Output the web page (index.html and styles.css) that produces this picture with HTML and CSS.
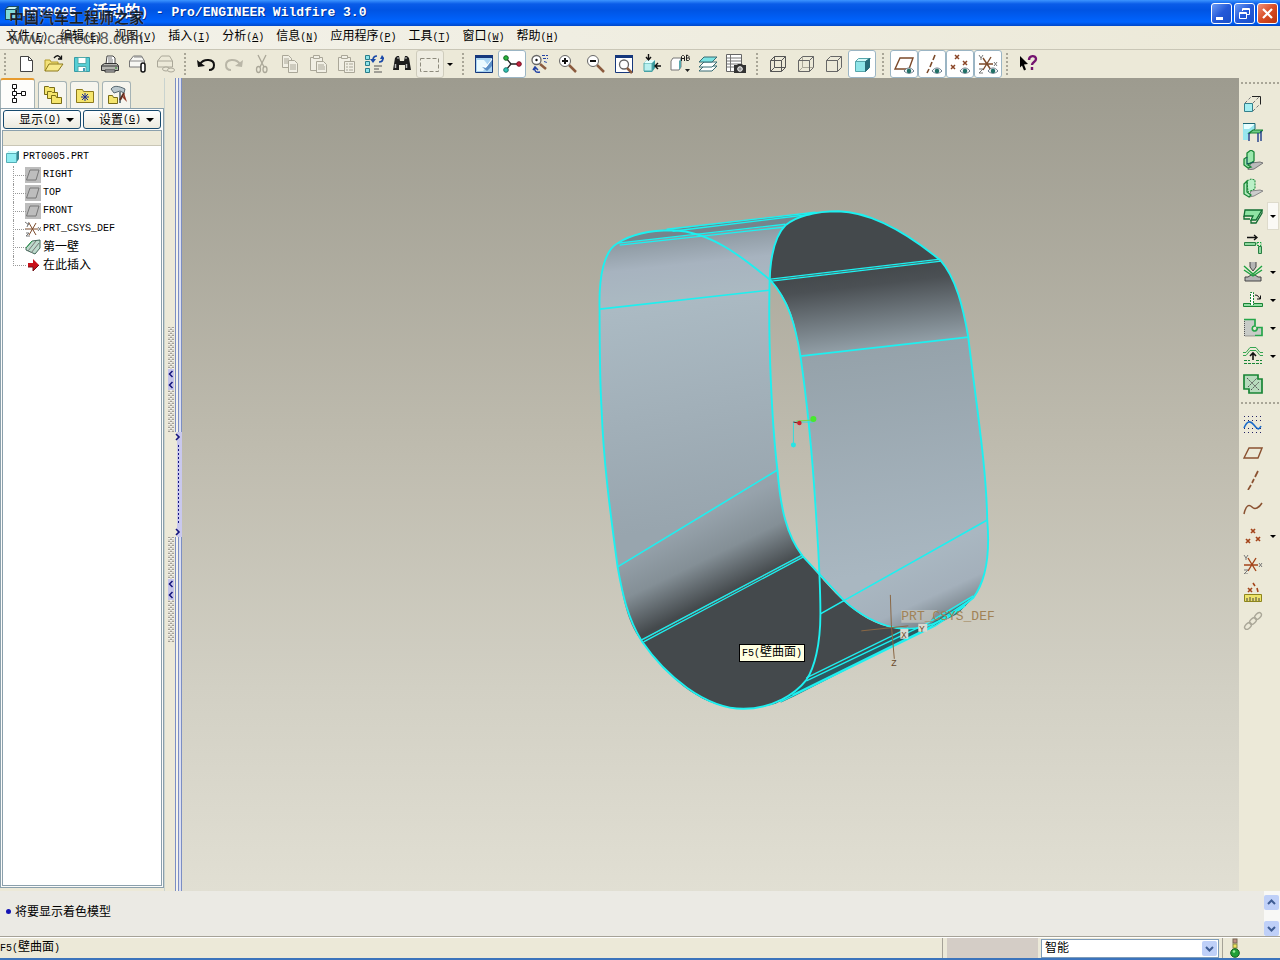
FILE: index.html
```html
<!DOCTYPE html>
<html lang="zh-CN">
<head>
<meta charset="utf-8">
<title>PRT0005 (活动的) - Pro/ENGINEER Wildfire 3.0</title>
<link rel="stylesheet" href="styles.css">
</head>
<body>
<div class="app">
<header class="titlebar">
  <svg class="app-icon" viewBox="0 0 16 16"><path d="M1 4l3-3h11v10l-3 4H1z" fill="#1b4a60"/><path d="M2 5h9v9H2z" fill="#7fd9d9"/><path d="M2 4l3-2h8l-2 2z" fill="#c8f4f0"/></svg>
  <h1 class="title">PRT0005 (<span class="title-cjk">活动的</span>) - Pro/ENGINEER Wildfire 3.0</h1>
  <div class="win-buttons">
    <button class="win" aria-label="最小化"><svg viewBox="0 0 19 19"><path d="M4 13h7v3H4z" fill="#fff"/></svg></button>
    <button class="win" aria-label="还原"><svg viewBox="0 0 19 19" fill="none" stroke="#fff"><path d="M7.500 7V4.500h7v6H12M7 5.500h8"/><path d="M4.500 8.500h7v6h-7zM4 9.500h8"/></svg></button>
    <button class="win close" aria-label="关闭"><svg viewBox="0 0 19 19"><path d="M5 5l9 9M14 5l-9 9" stroke="#fff" stroke-width="2.200"/></svg></button>
  </div>
  <div class="watermark"><span class="mark-name">中国汽车工程师之家</span><span class="mark-url">www.cartech8.com</span></div>
</header>

<nav class="menubar">
  <button>文件<span class="l">(<u>F</u>)</span></button>
  <button>编辑<span class="l">(<u>E</u>)</span></button>
  <button>视图<span class="l">(<u>V</u>)</span></button>
  <button>插入<span class="l">(<u>I</u>)</span></button>
  <button>分析<span class="l">(<u>A</u>)</span></button>
  <button>信息<span class="l">(<u>N</u>)</span></button>
  <button>应用程序<span class="l">(<u>P</u>)</span></button>
  <button>工具<span class="l">(<u>T</u>)</span></button>
  <button>窗口<span class="l">(<u>W</u>)</span></button>
  <button>帮助<span class="l">(<u>H</u>)</span></button>
</nav>

<div class="toolbar">
  <span class="grip"></span>
  <button class="tool" aria-label="新建"><svg viewBox="0 0 20 20"><path d="M4.500 2.500h8l4 4v11h-12z" fill="#fff" stroke="#444"/><path d="M12.500 2.500v4h4" fill="none" stroke="#444"/></svg></button>
  <button class="tool" aria-label="打开"><svg viewBox="0 0 20 20"><path d="M1 17V6h5l1 2h7v3" fill="#f3e27a" stroke="#b49b28"/><path d="M1 17l4-7h14l-5 7z" fill="#f7e98c" stroke="#8d7a1c"/><path d="M10 4c3-4 6-2 7 1m-3 0h3.500V1.500" fill="none" stroke="#111" stroke-width="1.300"/></svg></button>
  <button class="tool" aria-label="保存"><svg viewBox="0 0 20 20"><path d="M2.500 3.500h15v14h-15z" fill="#56cfd5" stroke="#379aa5"/><path d="M6 3.500h8v6H6zM6 12.500h8v5H6z" fill="#fff" stroke="#5aa"/><path d="M11 14h2v3h-2z" fill="#49b"/></svg></button>
  <button class="tool" aria-label="打印"><svg viewBox="0 0 20 20"><path d="M6 10l1-8h6l2 2v6" fill="#fff" stroke="#444"/><path d="M8 4h4M8 6h5M8 8h5" stroke="#777"/><path d="M1.500 11.500l3-2h12l2 2v5h-17z" fill="#b5b5b0" stroke="#333"/><path d="M2 12h16M5 16h10v2H5z" stroke="#333" fill="#ddd"/><path d="M15 14h2" stroke="#282"/></svg></button>
  <button class="tool" aria-label="发送"><svg viewBox="0 0 20 20"><path d="M1.500 7l4-5h8l3 5v6h-15z" fill="#f7f7f3" stroke="#777"/><path d="M2 7h14M6 3l8 0" fill="none" stroke="#888"/><rect x="13" y="9" width="4" height="9" rx="2" fill="#fff" stroke="#111" stroke-width="1.500"/></svg></button>
  <button class="tool" aria-label="链接发送"><svg viewBox="0 0 20 20" fill="none" stroke="#aaa798"><path d="M1.500 7l4-5h8l3 5v6h-15z"/><path d="M2 7h14"/><g fill="#ece9d8"><ellipse cx="10" cy="15" rx="3.500" ry="2"/><ellipse cx="15" cy="16" rx="3.500" ry="2"/></g></svg></button>
  <span class="grip"></span>
  <button class="tool" aria-label="撤消"><svg viewBox="0 0 20 20"><path d="M4 10c4-6 14-5 14 1 0 3-2 5-5 5" fill="none" stroke="#111" stroke-width="2"/><path d="M1 6l1 7 7-1z" fill="#111"/></svg></button>
  <button class="tool" aria-label="重做"><svg viewBox="0 0 20 20"><path d="M16 10C12 4 2 5 2 11c0 3 2 5 5 5" fill="none" stroke="#b9b6a7" stroke-width="2"/><path d="M19 6l-1 7-7-1z" fill="#b9b6a7"/></svg></button>
  <button class="tool" aria-label="剪切"><svg viewBox="0 0 20 20" fill="none" stroke="#aaa798" stroke-width="1.300"><path d="M6 1l6 12M14 1L8 13"/><ellipse cx="6.500" cy="15.500" rx="2" ry="3"/><ellipse cx="13" cy="15.500" rx="2" ry="3"/></svg></button>
  <button class="tool" aria-label="复制"><svg viewBox="0 0 20 20" fill="#f1efe4" stroke="#aaa798"><path d="M2.500 1.500h6l3 3v9h-9z"/><path d="M8.500 6.500h6l3 3v9h-9z"/><path d="M4 5h5M4 7h4M4 9h4M10 11h6M10 13h6M10 15h6"/></svg></button>
  <button class="tool" aria-label="粘贴"><svg viewBox="0 0 20 20" fill="#f1efe4" stroke="#aaa798"><path d="M2.500 3.500h12v13h-12z"/><path d="M5.500 1.500h6v3h-6z"/><path d="M8.500 7.500h7l3 3v8h-10z"/><path d="M10 11h6M10 13h7M10 15h7"/></svg></button>
  <button class="tool" aria-label="选择性粘贴"><svg viewBox="0 0 20 20" fill="#f1efe4" stroke="#aaa798"><path d="M2.500 3.500h12v13h-12z"/><path d="M5.500 1.500h6v3h-6z"/><path d="M8.500 7.500h10v11h-10z"/><path d="M10 10h2m1 0h4M10 13h2m1 0h4M10 16h2m1 0h4"/></svg></button>
  <button class="tool" aria-label="再生"><svg viewBox="0 0 20 20"><path d="M1.500 1.500h4v4h-4zM1.500 7.500h4v4h-4zM1.500 14.500h4v4h-4z" fill="#8ee3e8" stroke="#287d8b"/><path d="M9 6c0-3 2-4 4-4M19 4c0 3-2 4-4 4" fill="none" stroke="#1b4aa8" stroke-width="1.700"/><path d="M6 5h6l-3 4zM16 5h5l-3-4z" fill="#1b4aa8"/><path d="M10 12h8M10 15h5M10 18h8" stroke="#555"/></svg></button>
  <button class="tool" aria-label="查找"><svg viewBox="0 0 20 20"><path d="M3 4l2-2h2l1 5h4l1-5h2l2 2 2 12h-6v-5H7v5H1z" fill="#1d1d1d"/><path d="M3.500 10v4M14.500 10v4" stroke="#bbb" stroke-width="1.500"/><path d="M5 3h2v2H5zM13 3h2v2h-2z" fill="#777"/></svg></button>
  <button class="tool boxed" aria-label="选取"><svg viewBox="0 0 20 20"><path d="M.5 4.500h18v13H.5z" fill="none" stroke="#8d8a7d" stroke-dasharray="4 2"/></svg></button>
  <button class="drop" aria-label="选取选项"></button>
  <span class="grip wide"></span>
  <button class="tool" aria-label="重画"><svg viewBox="0 0 20 20"><path d="M1.500 1.500h17v17h-17z" fill="#a9d4f2" stroke="#16387c"/><path d="M1 1h18v3H1z" fill="#16387c"/><path d="M3 6h7l4 5-5 6H3z" fill="#eafaff"/><path d="M8 13l4 1 6-8v6l-5 5z" fill="#5c8fc5"/><path d="M9 12l3 1 6-8" fill="none" stroke="#fff"/></svg></button>
  <button class="tool on" aria-label="旋转中心"><svg viewBox="0 0 20 20"><path d="M4 4l5 6h8M9 10l-5 6" fill="none" stroke="#222" stroke-width="1.300"/><circle cx="4" cy="4" r="2.300" fill="#28b53c" stroke="#166321"/><circle cx="17" cy="10" r="2.300" fill="#c4213c" stroke="#761022"/><circle cx="4" cy="16" r="2.300" fill="#31c5b5" stroke="#1b776e"/></svg></button>
  <button class="tool" aria-label="定向模式"><svg viewBox="0 0 20 20"><path d="M10 10l6 5" stroke="#8b5b3e" stroke-width="2.500"/><circle cx="6.500" cy="6" r="4.500" fill="#fff" stroke="#666" stroke-width="1.300"/><circle cx="6.500" cy="6" r="1.200" fill="#111"/><path d="M12 1.500h6M13 4.500h5M14 7.500l3 1" stroke="#2343a5" stroke-dasharray="3 1"/><path d="M5 14c-1 3 1 5 5 4m-7-2l2-3 3 3" stroke="#2343a5" stroke-width="1.500" fill="none"/></svg></button>
  <button class="tool" aria-label="放大"><svg viewBox="0 0 20 20"><path d="M11 11l7 7" stroke="#8b5b3e" stroke-width="2.500"/><circle cx="7" cy="7" r="5.500" fill="#fff" stroke="#666"/><path d="M4 7h6M7 4v6" stroke="#111" stroke-width="2"/></svg></button>
  <button class="tool" aria-label="缩小"><svg viewBox="0 0 20 20"><path d="M11 11l7 7" stroke="#8b5b3e" stroke-width="2.500"/><circle cx="7" cy="7" r="5.500" fill="#fff" stroke="#666"/><path d="M4 7h6" stroke="#111" stroke-width="2"/></svg></button>
  <button class="tool" aria-label="重新调整"><svg viewBox="0 0 20 20"><path d="M1.500 1.500h17v17h-17z" fill="#fff" stroke="#16387c"/><path d="M1 1h18v3H1z" fill="#16387c"/><circle cx="10" cy="10.500" r="4.500" fill="#fff" stroke="#666" stroke-width="1.300"/><path d="M13 14l5 5" stroke="#8b5b3e" stroke-width="2.500"/></svg></button>
  <button class="tool" aria-label="重定向"><svg viewBox="0 0 20 20"><path d="M2 9l3-3h8v8l-3 4H2z" fill="#3a9aa0"/><path d="M2 9h8v8H2z" fill="#b9f0f0" stroke="#5aa"/><path d="M2 9l3-3h8l-3 3z" fill="#e4ffff"/><path d="M6.500 0v5M4 3l2.500 3L9 3M19 12h-5M16 9l-3 3 3 3" fill="none" stroke="#111" stroke-width="1.400"/></svg></button>
  <button class="tool" aria-label="视图列表"><svg viewBox="0 0 20 20"><path d="M1 7l2-3h8v9l-2 3H1z" fill="#fff" stroke="#777"/><path d="M11 5v8l-2 3V7z" fill="#58a7ad"/><path d="M11.500 7V2.500l1-1h1l1 1V7m-3-2.500h3M16.500 1v5.500h2l1-1V4.500l-1-.5.500-.5v-1l-1-1z M16.500 4h2" fill="none" stroke="#222"/><path d="M15 15h5l-2.500 3z" fill="#222"/></svg></button>
  <button class="tool" aria-label="层"><svg viewBox="0 0 20 20" stroke="#376b72"><path d="M1 17l5-5h13l-5 5z" fill="#fff"/><path d="M1 13l5-5h13l-5 5z" fill="#fff"/><path d="M1 8l5-5h13l-5 5z" fill="#7ce3e3"/></svg></button>
  <button class="tool" aria-label="视图管理器"><svg viewBox="0 0 20 20"><path d="M.5.500h15v17H.5z" fill="#fff" stroke="#666"/><path d="M4.500 1v16M1 4h14M1 7h14M1 10h14M1 13h14" stroke="#777"/><path d="M8 11h3l1-1h4l1 1h3v8H8z" fill="#333"/><circle cx="14" cy="15" r="2.300" fill="#999" stroke="#fff"/></svg></button>
  <span class="grip wide"></span>
  <button class="tool" aria-label="线框"><svg viewBox="0 0 20 20" fill="none" stroke="#555"><path d="M2.500 6.500h11v11h-11zM6.500 2.500h11v11h-11zM2.500 6.500l4-4M13.500 6.500l4-4M2.500 17.500l4-4M13.500 17.500l4-4"/></svg></button>
  <button class="tool" aria-label="隐藏线"><svg viewBox="0 0 20 20" fill="none" stroke="#666"><path d="M6.500 3v10.500H17M2.500 17.500l4-4" stroke="#aaa798"/><path d="M2.500 6.500h11v11h-11zM2.500 6.500l4-4h11v11l-4 4M13.500 6.500l4-4"/></svg></button>
  <button class="tool" aria-label="消隐"><svg viewBox="0 0 20 20" fill="none" stroke="#666"><path d="M2.500 6.500h11v11h-11zM2.500 6.500l4-4h11v11l-4 4M13.500 6.500l4-4"/></svg></button>
  <button class="tool on" aria-label="着色"><svg viewBox="0 0 20 20"><path d="M3.500 7.500h10v10h-10z" fill="#8fe5e9" stroke="#56a6ac"/><path d="M3.500 7.500l3-3h12l-5 3z" fill="#d2f9f9" stroke="#56a6ac"/><path d="M13.500 7.500l4-3v9l-4 4z" fill="#276c79" stroke="#276c79"/></svg></button>
  <span class="grip wide"></span>
  <button class="tool on" aria-label="基准平面"><svg viewBox="0 0 20 20"><path d="M1 15L6 4h13l-4 11z" fill="none" stroke="#7c4a2a" stroke-width="1.400"/><path d="M10 17c3-4 7-4 10 0-3 3-7 3-10 0z" fill="#fff" stroke="#678"/><circle cx="15" cy="17" r="2.300" fill="#217067"/></svg></button>
  <button class="tool on" aria-label="基准轴"><svg viewBox="0 0 20 20"><path d="M13 1l-2 5M10 8l-2 5M7 15l-2 4" stroke="#7c4a2a" stroke-width="1.600"/><path d="M10 17c3-4 7-4 10 0-3 3-7 3-10 0z" fill="#fff" stroke="#678"/><circle cx="15" cy="17" r="2.300" fill="#217067"/></svg></button>
  <button class="tool on" aria-label="基准点"><svg viewBox="0 0 20 20"><path d="M5 1l4 4m0-4L5 5M1 11l4 4m0-4l-4 4M13 7l4 4m0-4l-4 4" stroke="#8a4526" stroke-width="1.500"/><path d="M10 17c3-4 7-4 10 0-3 3-7 3-10 0z" fill="#fff" stroke="#678"/><circle cx="15" cy="17" r="2.300" fill="#217067"/></svg></button>
  <button class="tool on" aria-label="坐标系"><svg viewBox="0 0 20 20"><path d="M1 10h14M5 4l8 12M13 3L5 16" stroke="#7c4a2a" stroke-width="1.400"/><path d="M1 1l2 3 2-3M3 4v2M1 15h4l-4 4h4M16 8l3 4m0-4l-3 4" stroke="#777" fill="none"/><path d="M10 17c3-4 7-4 10 0-3 3-7 3-10 0z" fill="#fff" stroke="#678"/><circle cx="15" cy="17" r="2.300" fill="#217067"/></svg></button>
  <span class="grip"></span>
  <button class="tool" aria-label="上下文帮助"><svg viewBox="0 0 20 20"><path d="M2 2l8 8-4 .5 2 5-2 1-2-5-2 2z" fill="#000"/><path d="M11 6c0-5 7-5 7-1 0 3-4 3-4 6M14 13v3" stroke="#74136f" stroke-width="2.400" fill="none"/></svg></button>
</div>

<main class="work">
  <aside class="navigator">
    <div class="tabs">
      <button class="tab active" aria-label="模型树"><svg viewBox="0 0 20 20" fill="#fff" stroke="#111"><path d="M4.500.500h4v4h-4zM4.500 7.500h4v4h-4zM4.500 14.500h4v4h-4zM13.500 7.500h4v4h-4zM9 9.500h4M6.500 5v2M6.500 12v2"/></svg></button>
      <button class="tab" aria-label="文件夹浏览器"><svg viewBox="0 0 20 20" fill="#f5e56d" stroke="#7a6d16"><path d="M1.500 9.500v-8h4l1 1h5v7z"/><path d="M4.500 13.500v-7h4l1 1h5v6z"/><path d="M8.500 18.500v-8h4l1 2h5v6z"/></svg></button>
      <button class="tab" aria-label="收藏夹"><svg viewBox="0 0 20 20"><path d="M1.500 17.500v-13h6l1 2h10v11z" fill="#f5e56d" stroke="#8d7a1c"/><path d="M10 8v8M6 12h8M7 9l6 6M13 9l-6 6" stroke="#1a2c98"/></svg></button>
      <button class="tab" aria-label="连接"><svg viewBox="0 0 20 20"><path d="M1.500 18.500v-8h4l1 2h4v6z" fill="#f5e56d" stroke="#7a6d16"/><path d="M4 4c3-4 8-3 14 0l-1 4-4-2-6 2z" fill="#b9c7cd" stroke="#55666f"/><path d="M13 7v11" stroke="#6f7f85" stroke-width="2"/><path d="M17 8l-4 7" stroke="#5f2f22" stroke-width="2"/><path d="M17 8l3 9-4-4z" fill="#8f3422"/></svg></button>
    </div>
    <div class="panel">
      <div class="panel-buttons">
        <button class="panel-btn">显示<span class="l">(<u>O</u>)</span><i class="caret"></i></button>
        <button class="panel-btn">设置<span class="l">(<u>G</u>)</span><i class="caret"></i></button>
      </div>
      <div class="tree-box">
        <div class="tree-head"></div>
        <ul class="tree">
          <li class="root"><svg viewBox="0 0 16 16"><path d="M2 5l2-3h10v8l-3 4H2z" fill="#39838e"/><path d="M1.500 4.500h10v9h-10z" fill="#8eedf2" stroke="#55aeb6"/><path d="M2 4l2-2h9l-2 2z" fill="#cff"/></svg><span class="l">PRT0005.PRT</span></li>
          <li><svg viewBox="0 0 16 16"><path d="M0 0h16v16H0z" fill="#bdbdbd"/><path d="M1.500 13L5 3h9l-3 10z" fill="none" stroke="#777"/></svg><span class="l">RIGHT</span></li>
          <li><svg viewBox="0 0 16 16"><path d="M0 0h16v16H0z" fill="#bdbdbd"/><path d="M1.500 13L5 3h9l-3 10z" fill="none" stroke="#777"/></svg><span class="l">TOP</span></li>
          <li><svg viewBox="0 0 16 16"><path d="M0 0h16v16H0z" fill="#bdbdbd"/><path d="M1.500 13L5 3h9l-3 10z" fill="none" stroke="#777"/></svg><span class="l">FRONT</span></li>
          <li><svg viewBox="0 0 16 16"><path d="M0 8h13M4 2l7 12M11 2L4 14" stroke="#7c4a2a"/><path d="M0 1l4 3M4 1L2 6M1 12h3l-3 3h4M13 6l3 4m0-4l-3 4" stroke="#777" fill="none"/></svg><span class="l">PRT_CSYS_DEF</span></li>
          <li><svg viewBox="0 0 16 16"><path d="M1 9l6-7 8-1v8l-5 6-9-4z" fill="#bdd9cc" stroke="#43685a"/><path d="M3 12l8-10M6 14l8-10" stroke="#777"/><path d="M1 9l6-7" stroke="#2a9a4e"/></svg><span>第一壁</span></li>
          <li><svg viewBox="0 0 16 16"><path d="M3 6h5V2l6 6-6 6v-4H3z" fill="#c8111a"/><path d="M3 10h5v4l6-6" fill="none" stroke="#701015"/></svg><span>在此插入</span></li>
        </ul>
      </div>
    </div>
  </aside>
  <div class="gutter">
    <svg class="collapse" viewBox="0 0 6 105"><defs><pattern id="dots" width="4" height="4" patternUnits="userSpaceOnUse"><path d="M0 0h4v4H0z" fill="#d6d3c8"/><path d="M0 0h2v1H0zM2 2h2v1H2z" fill="#a3a097"/><path d="M0 1h2v1H0zM2 3h2v1H2z" fill="#f4f3ec"/></pattern></defs><path d="M0 0h6v105H0z" fill="url(#dots)"/><path d="M0 42h6v21H0z" fill="#c5c4ea"/><path d="M4.500 44l-3 3 3 3M4.500 55l-3 3 3 3" fill="none" stroke="#15157c" stroke-width="1.500"/></svg>
    <svg class="collapse" viewBox="0 0 6 105"><path d="M0 0h6v105H0z" fill="url(#dots)"/><path d="M0 42h6v21H0z" fill="#c5c4ea"/><path d="M4.500 44l-3 3 3 3M4.500 55l-3 3 3 3" fill="none" stroke="#15157c" stroke-width="1.500"/></svg>
  </div>
  <div class="sash">
    <svg viewBox="0 0 7 105"><path d="M0 0h7v105H0z" fill="#ece9d8"/><path d="M2 0h5v105H2z" fill="#c9c8ee"/><path d="M1 2l3 3-3 3M1 97l3 3-3 3" fill="none" stroke="#15157c" stroke-width="1.600"/><path d="M3.500 13v80" stroke="#15157c" stroke-dasharray="2 2"/></svg>
  </div>
  <section class="viewport">
    <svg class="model" viewBox="181 78 1058 813">
      <defs>
        <linearGradient id="gA" gradientUnits="userSpaceOnUse" x1="690" y1="233" x2="697" y2="300"><stop offset="0" stop-color="#8b979f"/><stop offset=".45" stop-color="#a7b3bf"/><stop offset="1" stop-color="#abbac2"/></linearGradient>
        <linearGradient id="gB" gradientUnits="userSpaceOnUse" x1="670" y1="300" x2="710" y2="520"><stop offset="0" stop-color="#abbac3"/><stop offset="1" stop-color="#98a5ae"/></linearGradient>
        <linearGradient id="gC" gradientUnits="userSpaceOnUse" x1="690" y1="522" x2="725" y2="594"><stop offset="0" stop-color="#97a3ac"/><stop offset=".5" stop-color="#848f96"/><stop offset="1" stop-color="#44494c"/></linearGradient>
        <linearGradient id="gF" gradientUnits="userSpaceOnUse" x1="880" y1="345" x2="910" y2="570"><stop offset="0" stop-color="#95a2aa"/><stop offset="1" stop-color="#a9b7c1"/></linearGradient>
        <linearGradient id="gG" gradientUnits="userSpaceOnUse" x1="860" y1="270" x2="869" y2="348"><stop offset="0" stop-color="#44494c"/><stop offset=".2" stop-color="#4b5054"/><stop offset="1" stop-color="#929fa7"/></linearGradient>
        <linearGradient id="gE" gradientUnits="userSpaceOnUse" x1="915" y1="560" x2="943" y2="620"><stop offset="0" stop-color="#a9b7c1"/><stop offset=".6" stop-color="#a4b0bb"/><stop offset="1" stop-color="#78838a"/></linearGradient>
      </defs>
      <path fill="#74858d" d="M617 243C632 234 650 230 672 229L815 212 785 226z"/>
      <path fill="url(#gA)" d="M599 309C599 280 603 250 617 243L785 225C775 236 770 255 769 290z"/>
      <path fill="url(#gB)" d="M599 309L769 290C768 350 772 430 777 470L617 567C606 490 599 430 599 309z"/>
      <path fill="url(#gC)" d="M617 567L777 470C780 505 785 532 802 556L641 641C625 620 622 595 617 567z"/>
      <path fill="#44494c" d="M641 641L802 556C830 588 860 629 905 629L930 627 775 704C720 720 680 695 641 641z"/>
      <path fill="#2c5a61" d="M807 680L910 629 930 627 973 598 960 611 930 627 793 697 780 703z"/>
      <path fill="url(#gF)" d="M800 356L968 337C976 410 985 460 987 520L844 601 819 575C818 510 810 420 800 356z"/>
      <path fill="url(#gE)" d="M844 601L987 520C990 550 986 580 973 598L930 627C895 633 868 622 844 601z"/>
      <path fill="url(#gG)" d="M770 280L940 260C957 280 963 310 968 337L800 356C794 315 788 300 770 280z"/>
      <path fill="#44494c" d="M770 280C770 258 773 237 785 225 800 213 820 211 838 211 875 212 910 235 940 260z"/>
      <path fill="#2e787b" d="M930 624L973 597 957 614 930 628z"/>
      <g fill="none" stroke="#1df0f0" stroke-width="1.900">
        <path d="M599 309C598 275 604 250 617 243C632 233 650 230 672 230C710 231 742 257 770 280C788 300 795 325 800 356C808 410 813 470 816 520C818 550 820 590 820 614C820 645 814 668 806 680C795 694 772 709 743 709C705 709 665 676 641 641C627 618 622 595 617 567C608 500 603 460 601 410C599 375 599 340 599 309z"/>
        <path d="M769 290C769 262 773 237 785 225C800 213 820 211 838 211C875 212 912 237 940 260C956 278 963 308 968 337C976 405 986 465 987 520C990 555 985 582 973 598C955 613 935 629 905 629C878 628 855 611 844 601L802 556C786 535 780 508 777 470C771 420 768 340 769 290z"/>
      </g>
      <g fill="none" stroke="#1df0f0">
        <path d="M617 243L785 224M619 245L783 227M666 229L815 212M672 231L811 214" stroke-width="1.300"/>
        <path d="M599 309L769 290M617 567L777 470M800 356L968 337M820 614L987 520" stroke-width="1.600"/>
        <path d="M770 279L940 259M771 281L941 261M641 640L802 555M643 642L803 557" stroke-width="1.300"/>
        <path d="M806 678L908 628M806 681L926 624 973 596M792 695L930 627 973 598M780 702L935 626 965 606" stroke-width="1.300"/>
      </g>
      <path d="M793 446v-24h20" fill="none" stroke="#38dada"/><path d="M796 421l16-1" stroke="#74d943"/><circle cx="813" cy="419" r="3" fill="#46e92e"/><path d="M793 422l5 1" stroke="#7a1616"/><circle cx="799" cy="423" r="2.200" fill="#d0202c"/><circle cx="793" cy="445" r="2.500" fill="#25e5e5"/>
      <path d="M901 610h36l-8 13h-28z" fill="#c4c6bf" opacity=".75"/>
      <path d="M890 595l1 30 3 34M861 631l47-5" fill="none" stroke="#8b6744"/>
      <path d="M900 629h8v10h-8zM918 624h9v8h-9z" fill="#d9dad3"/>
      <text class="csys" x="901" y="620">PRT_CSYS_DEF</text>
      <text class="axis" x="901" y="638">X</text><text class="axis" x="919" y="632">Y</text><text class="axis" x="891" y="666">Z</text>
    </svg>
    <div class="tooltip"><span class="l">F5(</span>壁曲面<span class="l">)</span></div>
  </section>

  <aside class="features">
    <span class="hgrip"></span>
    <div class="row"><button class="tool" aria-label="拉伸"><svg viewBox="0 0 20 20"><path d="M1.500 9.500h8v8h-8z" fill="#a4eff2" stroke="#34808c"/><path d="M2 9l7-7M10 9l7-7M10 17l7-7" stroke="#777" stroke-dasharray="3 2"/><path d="M9 2.500h8.500v8" fill="none" stroke="#222"/></svg></button></div>
    <div class="row"><button class="tool" aria-label="平整壁"><svg viewBox="0 0 20 20"><path d="M0 1h12v5L5 13v5H0z" fill="#98e6ee"/><path d="M1 2h11L6 7H1z" fill="#e7ffff"/><path d="M0 1.500h12V7L6 12" fill="none" stroke="#1b6574"/><path d="M6 11l4-3h10l-3 3z" fill="#6fcb86" stroke="#188535" stroke-width="1.200"/><path d="M6 11v8M15 11v9M18 9v10" fill="none" stroke="#1c3a8a" stroke-width="1.400"/></svg></button></div>
    <div class="row"><button class="tool" aria-label="法兰"><svg viewBox="0 0 20 20"><path d="M8 13l9-1 3 1-9 6-6 1z" fill="#bbb" stroke="#777"/><path d="M1 9l3-2V3l4-3 3 2v9l-6 4 3 2-3 1-4-3z" fill="#9ce8ad" stroke="#188535" stroke-width="1.300"/><path d="M4 7v7l7-2" fill="none" stroke="#135a58" stroke-width="1.300"/></svg></button></div>
    <div class="row"><button class="tool" aria-label="延伸法兰"><svg viewBox="0 0 20 20"><path d="M8 13l9-1 3 1-9 5-5 1z" fill="#ccc" stroke="#888"/><path d="M4 3l4-2 4 1v9l-7 3z" fill="#baf0c7" stroke="#188535" stroke-dasharray="2 1"/><path d="M4 3L1 6v10l5 3 2-2-4-3z" fill="#b2eabe" stroke="#188535" stroke-width="1.300"/></svg></button></div>
    <div class="row"><button class="tool" aria-label="平整"><svg viewBox="0 0 20 20"><path d="M2 4h17l-6 10H8l2-4H1z" fill="#8ee3a3" stroke="#116d32" stroke-width="1.300"/><path d="M1 10v3h6M8 14v3h5l6-10V4" fill="none" stroke="#116d32" stroke-width="1.300"/></svg></button><button class="drop lit" aria-label="平整选项"></button></div>
    <div class="row"><button class="tool" aria-label="延伸"><svg viewBox="0 0 20 20"><path d="M1.500 8.500h11v3h-11zM15.500 12.500h3v7h-3z" fill="#8cd79d" stroke="#2a7e43"/><path d="M4 3.500h10M11 1l3 2.500L11 6" fill="none" stroke="#111" stroke-width="1.300"/><path d="M14 8.500h4v3h-4z" stroke="#16a541" fill="none" stroke-dasharray="2 1"/></svg></button></div>
    <div class="row"><button class="tool" aria-label="折弯"><svg viewBox="0 0 20 20"><path d="M7 0v5l3 4 3-4V0M2 19v-4h3l3-2h4l3 2h3v4z" fill="#b5b5b5" stroke="#444"/><path d="M1 8l9 6 9-6M1 4l9 8 9-8" fill="none" stroke="#1ca13f" stroke-width="1.400"/></svg></button><button class="drop" aria-label="折弯选项"></button></div>
    <div class="row"><button class="tool" aria-label="展平"><svg viewBox="0 0 20 20"><path d="M.5 13.500h19v3H.5z" fill="#91dba3" stroke="#188535"/><path d="M7.500 15V2.500h3V15" fill="#fff" stroke="#188535" stroke-dasharray="2 1"/><path d="M12 5c3 0 4 2 5 4m-3 0h3.500V5.500" fill="none" stroke="#111"/></svg></button><button class="drop" aria-label="展平选项"></button></div>
    <div class="row"><button class="tool" aria-label="切口"><svg viewBox="0 0 20 20"><path d="M1 1h11v7a2.500 2.500 0 1 0 1 2h6v8H1z" fill="#c8cbc7"/><path d="M1 1.500h11V8a2.500 2.500 0 1 0 2 1.500h5v8h-7" fill="none" stroke="#25a64a" stroke-width="1.700"/><path d="M1.500 3v15H12" fill="none" stroke="#555" stroke-dasharray="1 1"/></svg></button><button class="drop" aria-label="切口选项"></button></div>
    <div class="row"><button class="tool" aria-label="成形"><svg viewBox="0 0 20 20"><path d="M0 9.500h3l4-5h6l4 5h3M0 6.500h3l4-5h6l4 5h3" fill="none" stroke="#34a550"/><path d="M10 14V7M7 10l3-3 3 3" fill="none" stroke="#111" stroke-width="1.600"/><path d="M1 14.500h6m6 0h6M1 17.500h18" stroke="#188535" stroke-dasharray="3 1"/></svg></button><button class="drop" aria-label="成形选项"></button></div>
    <div class="row"><button class="tool" aria-label="合并"><svg viewBox="0 0 20 20"><path d="M1 1h14v4h4v14H6v-4H1z" fill="#b7dbbd" stroke="#188535" stroke-width="1.700"/><path d="M4 4l12 12M5 13l9-9M8 16l8-8" stroke="#555" stroke-dasharray="2 1"/></svg></button></div>
    <span class="hgrip"></span>
    <div class="row"><button class="tool" aria-label="草绘"><svg viewBox="0 0 20 20"><path d="M1 2.500h18M1 6.500h18M1 14.500h18M1 18.500h18" stroke="#226" stroke-dasharray="1 3"/><path d="M1 14c3-7 6-8 10-3s5 5 7 1" fill="none" stroke="#1769c9" stroke-width="1.600"/></svg></button></div>
    <div class="row"><button class="tool" aria-label="平面"><svg viewBox="0 0 20 20"><path d="M1 16L6 6h13l-4 10z" fill="none" stroke="#8a5130" stroke-width="1.400"/></svg></button></div>
    <div class="row"><button class="tool" aria-label="轴"><svg viewBox="0 0 20 20"><path d="M15 1l-3 6M11 9l-2 4M8 15l-3 5" stroke="#8a5130" stroke-width="1.700"/></svg></button></div>
    <div class="row"><button class="tool" aria-label="曲线"><svg viewBox="0 0 20 20"><path d="M1 16c2-9 5-10 8-7s7 1 10-4" fill="none" stroke="#8a5130" stroke-width="1.500"/></svg></button></div>
    <div class="row"><button class="tool" aria-label="点"><svg viewBox="0 0 20 20"><path d="M8 3l4 4m0-4L8 7M3 13l4 4m0-4l-4 4M13 11l4 4m0-4l-4 4" stroke="#a4441a" stroke-width="1.700"/></svg></button><button class="drop" aria-label="点选项"></button></div>
    <div class="row"><button class="tool" aria-label="坐标系"><svg viewBox="0 0 20 20"><path d="M1 11h14M5 4l8 13M13 4L5 17" stroke="#a4441a" stroke-width="1.400"/><path d="M1 1l2 3 2-3M3 4v2M1 16h4l-4 4h4M16 9l3 4m0-4l-3 4" stroke="#777" fill="none"/></svg></button></div>
    <div class="row"><button class="tool" aria-label="分析"><svg viewBox="0 0 20 20"><path d="M5 6l4 4m0-4l-4 4M10 1l2 3M14 6l1 4" stroke="#a4441a" stroke-width="1.600"/><path d="M1.500 12.500h17v7h-17z" fill="#eee36a" stroke="#8d851c"/><path d="M4 19v-3M7 19v-4M10 19v-3M13 19v-4M16 19v-3" stroke="#444"/></svg></button></div>
    <div class="row"><button class="tool" aria-label="参照"><svg viewBox="0 0 20 20" fill="none" stroke="#aaa798" stroke-width="1.400"><ellipse cx="5" cy="16" rx="4" ry="2.500" transform="rotate(-45 5 16)"/><ellipse cx="10" cy="11" rx="4" ry="2.500" transform="rotate(-45 10 11)"/><ellipse cx="15" cy="6" rx="4" ry="2.500" transform="rotate(-45 15 6)"/></svg></button></div>
  </aside>
</main>

<section class="messages">
  <p class="message">将要显示着色模型</p>
  <div class="scroller">
    <button class="scroll" aria-label="向上"><svg viewBox="0 0 15 15"><path d="M4 9l3.500-3.500L11 9" fill="none" stroke="#3f5d94" stroke-width="2"/></svg></button>
    <button class="scroll" aria-label="向下"><svg viewBox="0 0 15 15"><path d="M4 6l3.500 3.500L11 6" fill="none" stroke="#3f5d94" stroke-width="2"/></svg></button>
  </div>
</section>

<footer class="status">
  <span class="status-text"><span class="l">F5(</span>壁曲面<span class="l">)</span></span>
  <span class="status-block"></span>
  <span class="filter"><select aria-label="过滤器"><option>智能</option></select><svg viewBox="0 0 15 15"><rect width="15" height="15" rx="2" fill="#bfd0f8"/><path d="M4 6l3.500 3.500L11 6" fill="none" stroke="#3f5d94" stroke-width="2"/></svg></span>
  <span class="light"><svg viewBox="0 0 12 20"><rect x="4" y="1" width="4" height="4" fill="#bf8f85" stroke="#765"/><rect x="4" y="6" width="4" height="4" fill="#eee25c" stroke="#884"/><circle cx="6" cy="15" r="4.300" fill="#22a036" stroke="#135d1d"/><circle cx="5" cy="13.500" r="1.300" fill="#9ef0a0"/></svg></span>
</footer>
</div>
</body>
</html>
```

FILE: styles.css
```css
* { box-sizing: border-box; }
body {
  margin: 0;
  font-family: "Liberation Sans", "Noto Sans CJK SC", sans-serif;
  font-size: 12px;
  line-height: 16px;
  color: #000;
}
button {
  font: inherit;
  color: inherit;
  margin: 0;
  padding: 0;
  border: 0;
  background: none;
  white-space: nowrap;
}
svg { display: block; flex: none; }
.l { font-family: "Liberation Mono", monospace; font-size: 10px; }
.app { display: flex; flex-direction: column; min-height: 100vh; background: #ece9d8; }

.titlebar {
  position: relative;
  display: flex;
  align-items: center;
  height: 26px;
  padding: 0 2px 0 4px;
  background: linear-gradient(#3d95ff 0, #0a5ce8 4px, #0054e3 10px, #0064ff 22px, #0047c8 26px);
}
.app-icon { width: 16px; height: 16px; }
.title {
  flex: 1;
  margin: 0 0 0 2px;
  font-family: "Liberation Mono", "Noto Sans CJK SC", monospace;
  font-size: 13px;
  line-height: 20px;
  color: #fff;
  text-shadow: 1px 1px #003399;
  white-space: nowrap;
}
.title-cjk { font-size: 16px; line-height: 16px; vertical-align: -1px; }
.win-buttons { display: flex; gap: 2px; }
.win {
  width: 21px;
  height: 21px;
  border: 1px solid #fff;
  border-radius: 3px;
  background: linear-gradient(135deg, #6c9cf5, #2459d8 50%, #1b50c8);
}
.win.close { background: linear-gradient(135deg, #f0907a, #d84c24 50%, #b93410); }
.win svg { width: 19px; height: 19px; }
.watermark {
  position: absolute;
  z-index: 2;
  left: 9px;
  top: 7px;
  display: flex;
  flex-direction: column;
  pointer-events: none;
}
.mark-name {
  font-size: 15px;
  line-height: 22px;
  font-weight: bold;
  color: #14202e;
  text-shadow: 0 0 1px #b8cff0;
}
.mark-url { font-size: 16px; line-height: 20px; color: rgba(50, 50, 50, .8); }

.menubar {
  display: flex;
  gap: 12px;
  height: 24px;
  padding: 2px 6px 6px;
  border-bottom: 1px solid #c9c6b6;
  background: linear-gradient(90deg, #f3f2ea, #ece9d8);
}

.toolbar { display: flex; height: 28px; }
.grip { position: relative; width: 12px; flex: none; padding: 3px 0 2px 4px; }
.grip::before { content: ""; display: block; height: 100%; width: 2px; background: repeating-linear-gradient(#a9a697 0 2px, #ece9d8 2px 4px); }
.grip.wide { width: 14px; padding-left: 6px; }
.tool { display: flex; align-items: center; justify-content: center; width: 28px; height: 28px; flex: none; border: 1px solid transparent; border-radius: 3px; }
.tool svg { width: 20px; height: 20px; }
.tool.on { background: #fff; border-color: #9bb5c4; }
.tool.boxed { background: #efede2; border-color: #cfccbc; }
.drop { display: flex; align-items: center; justify-content: center; width: 12px; height: 28px; }
.drop::before, .caret { content: ""; border: 3px solid transparent; border-top-color: #000; border-bottom: 0; }
.drop.lit { background: #faf9f5; border: 1px solid #dedbcc; }

.work { display: flex; flex: 1; }
.navigator { display: flex; flex-direction: column; width: 164px; flex: none; }
.tabs { display: flex; align-items: flex-end; gap: 3px; height: 30px; }
.tab {
  display: flex;
  align-items: center;
  justify-content: center;
  width: 29px;
  height: 27px;
  border: 1px solid #a5b3b5;
  border-bottom: 0;
  border-radius: 3px 3px 0 0;
  background: #f6f5ee;
}
.tab.active { width: 35px; height: 30px; border-top: 2px solid #e79b2f; background: #fdfdfb; }
.tab svg { width: 20px; height: 20px; }
.panel {
  display: flex;
  flex: 1;
  flex-direction: column;
  gap: 1px;
  margin-bottom: 3px;
  padding: 1px;
  border: 1px solid #8ba0ac;
  background: #fcfcfa;
}
.panel-buttons { display: flex; gap: 2px; padding: 0 1px; }
.panel-btn {
  display: flex;
  flex: 1;
  align-items: center;
  justify-content: flex-end;
  height: 19px;
  padding-right: 6px;
  border: 1px solid #174a6e;
  border-radius: 3px;
  background: linear-gradient(#fff, #eceade);
}
.caret { margin-left: 5px; border-width: 4px 4px 0; }
.tree-box { flex: 1; border: 1px solid #8ba0ac; background: #fff; }
.tree-head { height: 15px; border-bottom: 1px solid #c9c6b6; background: #ece9d8; }
.tree { margin: 0; padding: 2px 0 0 2px; list-style: none; }
.tree li { position: relative; display: flex; align-items: center; gap: 2px; height: 18px; padding-left: 20px; white-space: nowrap; }
.tree li.root { padding-left: 0; }
.tree svg { width: 16px; height: 16px; }
.tree li:not(.root)::before { content: ""; position: absolute; left: 8px; top: 0; width: 12px; height: 9px; border-left: 1px dotted #999; border-bottom: 1px dotted #999; }
.tree li:not(.root):not(:last-child)::after { content: ""; position: absolute; left: 8px; top: 9px; height: 9px; border-left: 1px dotted #999; }

.gutter { display: flex; flex-direction: column; justify-content: center; align-items: flex-end; gap: 105px; width: 11px; flex: none; padding-right: 1px; border-left: 1px solid #c9d3cf; }
.collapse { width: 6px; height: 105px; }
.sash {
  display: flex;
  align-items: center;
  width: 7px;
  flex: none;
  background: linear-gradient(90deg, #7b8ec4 0 1px, #f4f3ec 1px 3px, #7b8ec4 3px 4px, #dcdff2 4px 6px, #7b8ec4 6px 7px);
}
.sash svg { width: 7px; height: 105px; }

.viewport { position: relative; flex: 1; min-width: 0; background: linear-gradient(#9d9b8f, #bebbae 45%, #d2d0c4 75%, #e1dfd3); }
.model { width: 100%; height: 100%; }
.csys { font: 13px "Liberation Mono", monospace; fill: #a08256; }
.axis { font: 9px "Liberation Mono", monospace; fill: #6a4a2c; }
.tooltip { position: absolute; left: 557px; top: 566px; padding: 0 2px; border: 1px solid #000; background: #ffffe1; line-height: 15px; white-space: nowrap; }

.features { width: 41px; flex: none; }
.hgrip { display: block; height: 12px; padding: 4px 0 0 2px; }
.hgrip::before { content: ""; display: block; height: 2px; background: repeating-linear-gradient(90deg, #a9a697 0 2px, #ece9d8 2px 4px); }
.row { display: flex; height: 28px; }

.messages { display: flex; height: 46px; border-bottom: 1px solid #a5a297; background: #ebeae4; }
.message { display: flex; flex: 1; align-items: center; gap: 4px; margin: 0; padding: 0 0 4px 6px; }
.message::before { content: ""; width: 5px; height: 5px; border-radius: 50%; background: #1414b4; }
.scroller { display: flex; flex-direction: column; justify-content: space-between; width: 16px; padding-top: 4px; background: #f8f8f6; }
.scroll { width: 15px; height: 15px; border-radius: 2px; background: #bfd0f8; }
.scroll svg { width: 15px; height: 15px; }

.status { display: flex; align-items: center; height: 23px; border-top: 1px solid #fff; border-bottom: 2px solid #3c74bc; }
.status-text { flex: 1; white-space: nowrap; }
.status-block { width: 95px; height: 20px; border-left: 4px solid #ece9d8; background: #d4cdc6; box-shadow: -1px 0 #a5a297; }
.filter { position: relative; width: 178px; height: 19px; margin-left: 3px; }
.filter select {
  appearance: none;
  width: 100%;
  height: 100%;
  padding: 0 20px 0 3px;
  border: 1px solid #7f9db9;
  border-radius: 0;
  background: #fff;
  font: inherit;
  color: #000;
}
.filter svg { position: absolute; right: 2px; top: 2px; width: 15px; height: 15px; pointer-events: none; }
.light { width: 58px; height: 20px; margin-left: 3px; padding-left: 6px; border-left: 1px solid #a5a297; }
.light svg { width: 12px; height: 20px; }
```
